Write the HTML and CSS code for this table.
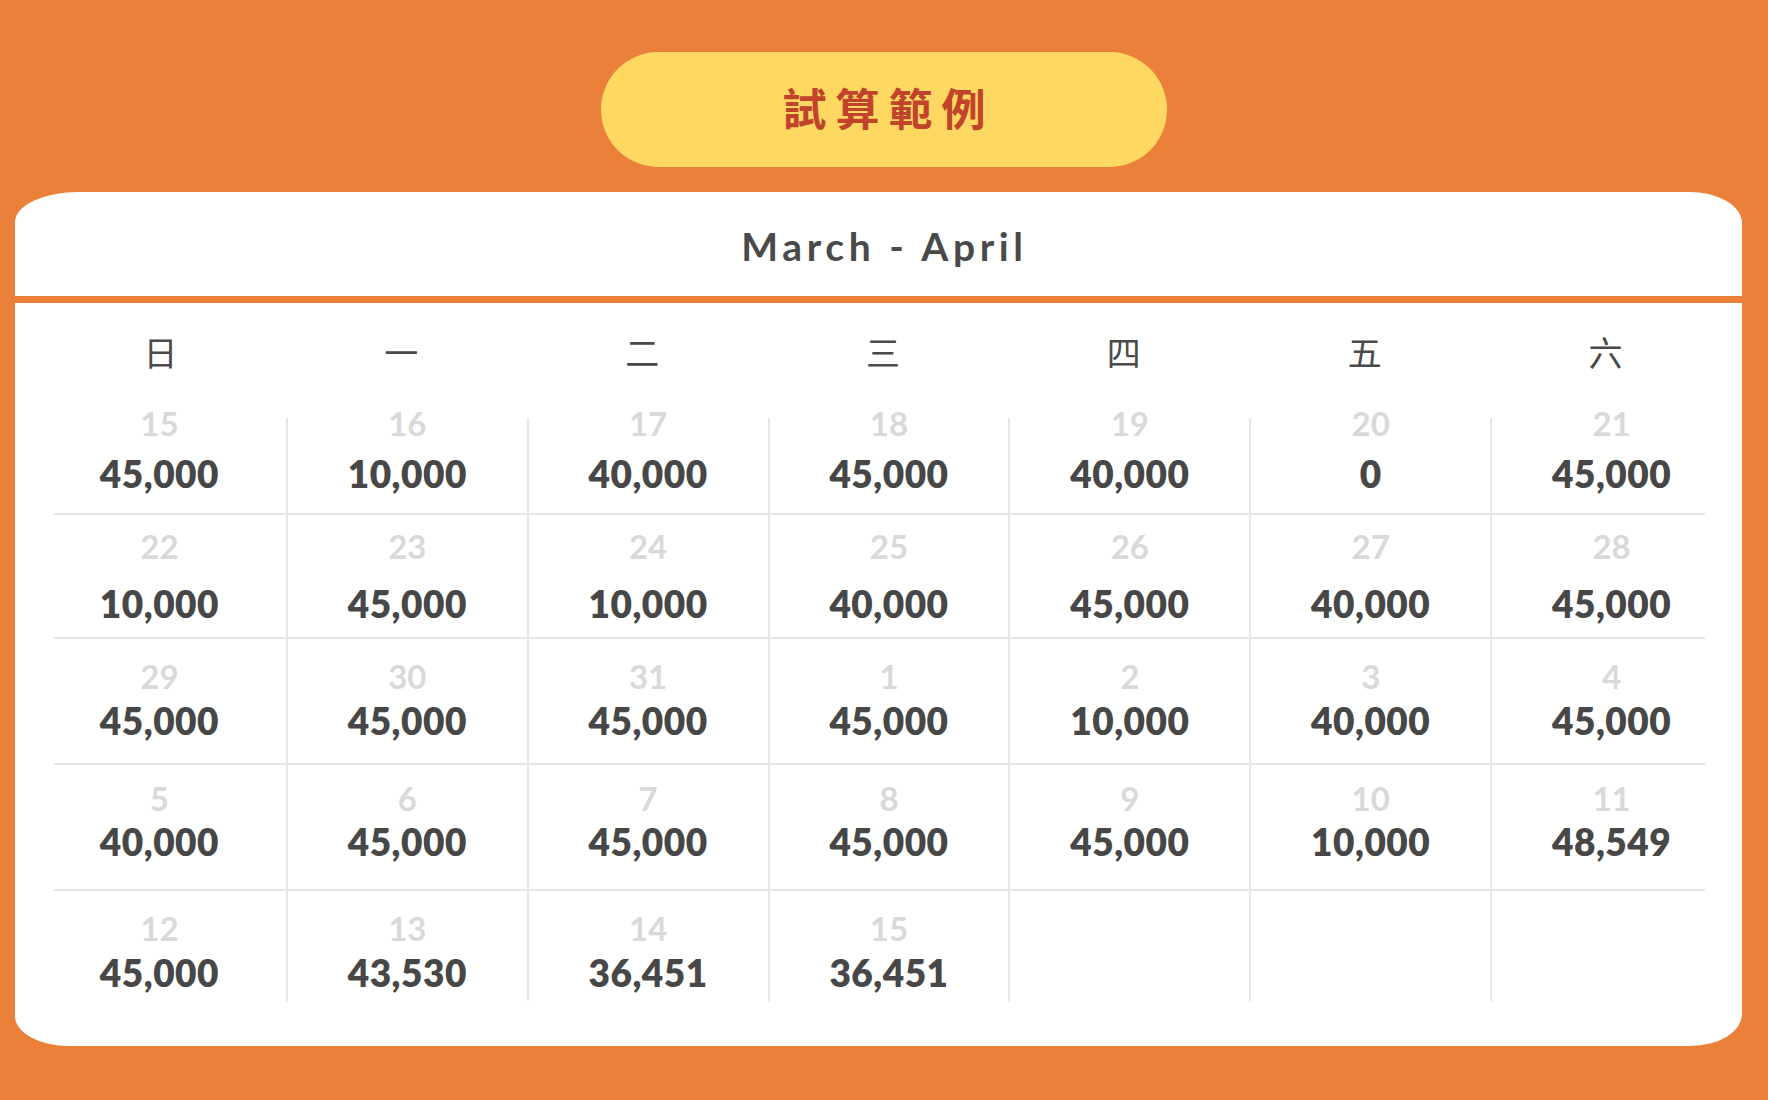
FILE: index.html
```html
<!DOCTYPE html>
<html lang="zh-Hant">

<head>
    <meta charset="UTF-8" />
    <meta name="viewport" content="width=device-width, initial-scale=1.0" />
    <title>試算範例</title>
    <link rel="stylesheet" href="styles.css">
</head>

<body>
    <div class="title-wrap">
        <h1 class="title">試算範例</h1>
    </div>

    <div class="card">
        <div class="card-head">
            <h2>March - April</h2>
        </div>

        <div class="card-body">
            <div class="weekdays">
                <span>日</span>
                <span>一</span>
                <span>二</span>
                <span>三</span>
                <span>四</span>
                <span>五</span>
                <span>六</span>
            </div>

            <div id="weeks"></div>
        </div>
    </div>

    <script>
        const days = [
            ["15", "45,000"], ["16", "10,000"], ["17", "40,000"], ["18", "45,000"], ["19", "40,000"], ["20", "0"], ["21", "45,000"],
            ["22", "10,000"], ["23", "45,000"], ["24", "10,000"], ["25", "40,000"], ["26", "45,000"], ["27", "40,000"], ["28", "45,000"],
            ["29", "45,000"], ["30", "45,000"], ["31", "45,000"], ["1", "45,000"], ["2", "10,000"], ["3", "40,000"], ["4", "45,000"],
            ["5", "40,000"], ["6", "45,000"], ["7", "45,000"], ["8", "45,000"], ["9", "45,000"], ["10", "10,000"], ["11", "48,549"],
            ["12", "45,000"], ["13", "43,530"], ["14", "36,451"], ["15", "36,451"], null, null, null
        ];

        const weeksDiv = document.getElementById("weeks");

        for (let w = 0; w < days.length / 7; w++) {
            const week = document.createElement("div");
            week.className = "week week-" + (w + 1);
            days.slice(w * 7, w * 7 + 7).forEach(d => {
                if (!d) {
                    week.innerHTML += `<div class="day"></div>`;
                    return;
                }
                week.innerHTML += `
          <div class="day">
            <span class="date">${d[0]}</span>
            <span class="amount">${d[1]}</span>
          </div>
        `;
            });
            weeksDiv.appendChild(week);
        }
    </script>
</body>

</html>
```

FILE: styles.css
```css
body {
    margin: 0;
    background: #ea803a;
    font-family: Lato, "Noto Sans CJK TC", sans-serif;
    color: #474747;
}

.title-wrap {
    display: flex;
    justify-content: center;
    padding-top: 52px;
}

.title {
    box-sizing: border-box;
    width: 566px;
    height: 115px;
    margin: 0;
    padding-bottom: 6px;
    display: flex;
    align-items: center;
    justify-content: center;
    background: #ffd862;
    border-radius: 58px;
    font: 700 44px/1 "Noto Sans CJK TC", sans-serif;
    letter-spacing: 9px;
    text-indent: 9px;
    color: #c1432b;
}

.card {
    margin: 25px 26px 0 15px;
}

.card-head {
    height: 104px;
    display: flex;
    align-items: center;
    justify-content: center;
    background: #fff;
    border-radius: 64px 53px 0 0 / 30px 31px 0 0;
}

.card-head h2 {
    margin: 4px 0 0;
    padding-left: 12px;
    font: 700 39px/1 Lato, sans-serif;
    letter-spacing: 4.6px;
    color: #4a4a4a;
}

.card-body {
    margin-top: 7px;
    padding: 30px 11px 45px 30px;
    background: #fff;
    border-radius: 0 0 52px 54px / 0 0 32px 30px;
}

.weekdays {
    display: grid;
    grid-template-columns: repeat(7, 1fr);
    margin-bottom: 47px;
    font: 400 34px/38px "Noto Sans CJK TC", sans-serif;
    color: #4a4a4a;
}

.weekdays span {
    text-align: center;
    padding-right: 10px;
}

.week {
    display: grid;
    grid-template-columns: repeat(7, 1fr);
    background: linear-gradient(#e6e6e6, #e6e6e6) no-repeat 9px 0 / 1651px 2px;
}

.week-1 {
    height: 95px;
    background: none;
    --top: -11px;
    --gap: 15px;
}

.week-2 {
    height: 124px;
    --top: 17px;
    --gap: 22px;
}

.week-3 {
    height: 126px;
    --top: 23px;
    --gap: 9px;
}

.week-4 {
    height: 126px;
    --top: 19px;
    --gap: 8px;
}

.week-5 {
    height: 112px;
    --top: 23px;
    --gap: 9px;
}

.day {
    display: flex;
    flex-direction: column;
    align-items: center;
}

.day:first-child {
    padding-right: 12px;
}

.day + .day {
    border-left: 2px solid #e6e6e6;
}

.date {
    margin-top: var(--top);
    font: 700 33px/33px Lato, sans-serif;
    color: #d9d9d9;
}

.amount {
    margin-top: var(--gap);
    font: 800 37px/37px Lato, sans-serif;
    letter-spacing: 0.5px;
    color: #474747;
}
```
